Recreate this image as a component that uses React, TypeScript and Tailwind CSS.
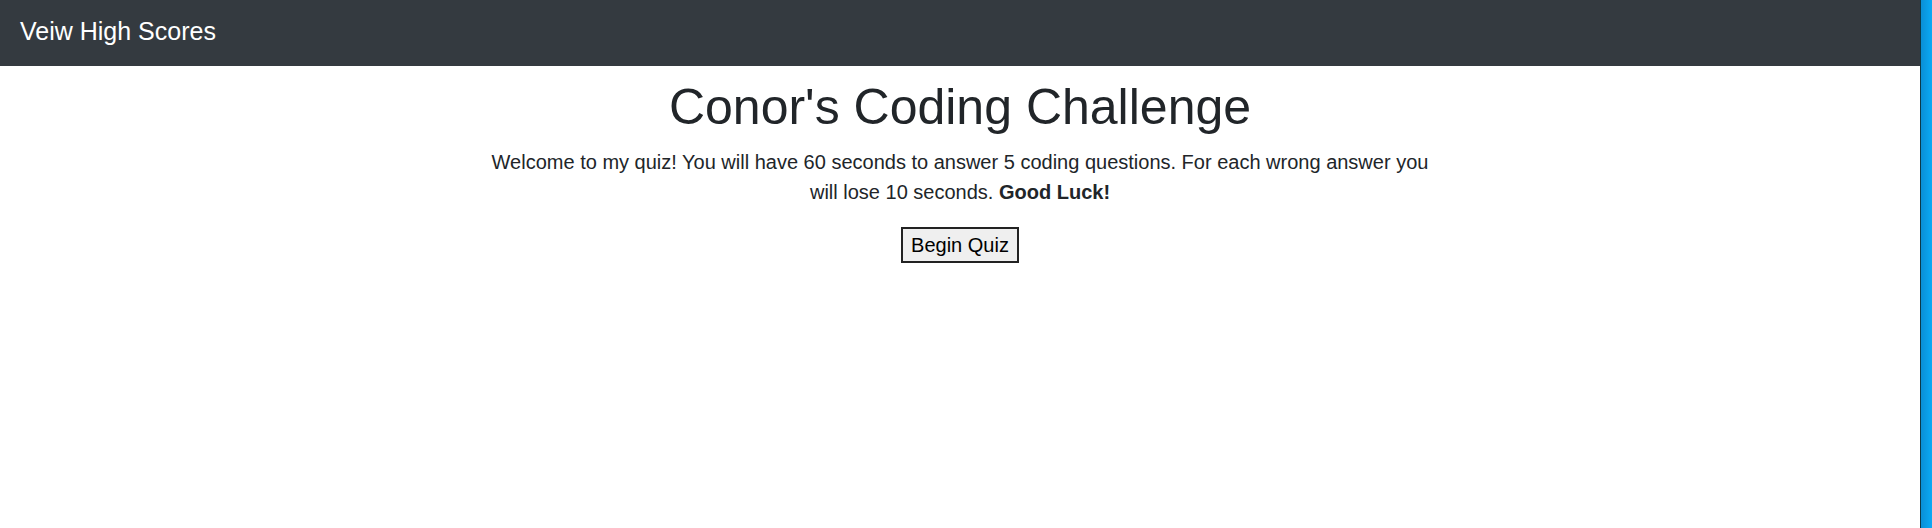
export default function App() {
  return (
    <div className="flex h-[528px] w-full overflow-hidden bg-white font-['Liberation_Sans',Arial,sans-serif] text-[#212529]">
      <div className="flex w-[1920px] shrink-0 flex-col">
        <nav className="flex h-[66px] items-center bg-[#343a40] px-5 pb-1">
          <a href="#" className="text-[25px] leading-none text-white">
            Veiw High Scores
          </a>
        </nav>

        <main className="flex flex-col items-center text-center">
          <h1 className="mt-[11px] mb-[10px] text-[50px] leading-[1.2]">Conor's Coding Challenge</h1>
          <p className="mb-5 max-w-[960px] text-[20px] leading-[1.5]">
            Welcome to my quiz! You will have 60 seconds to answer 5 coding questions. For each wrong answer you
            will lose 10 seconds. <b>Good Luck!</b>
          </p>
          <button className="border-2 border-[#222] bg-[#efefef] px-[8px] py-[4px] text-[20px] leading-[1.2] text-black">
            Begin Quiz
          </button>
        </main>
      </div>
      <div className="w-px shrink-0 bg-[#0b3a4a]" />
      <div className="flex-1 bg-gradient-to-r from-[#0a8fd6] to-[#0aaaf5]" />
    </div>
  );
}
